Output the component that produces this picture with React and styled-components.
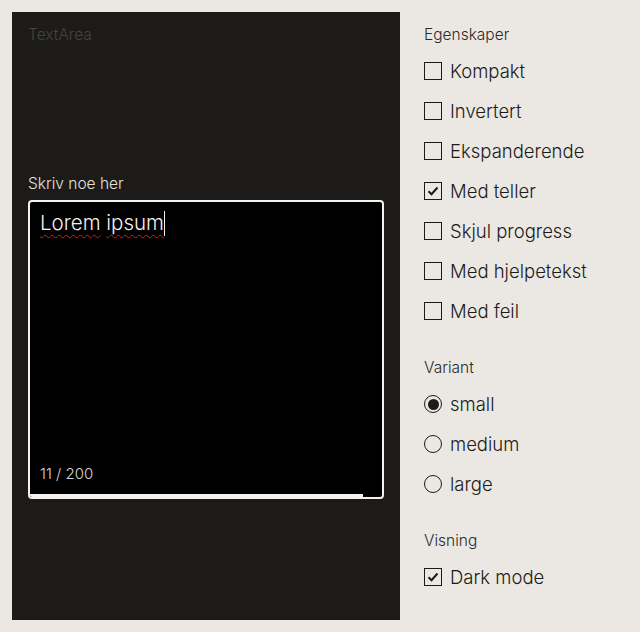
import React, { useState } from "react";
import styled, { createGlobalStyle } from "styled-components";

const GlobalStyle = createGlobalStyle`
  html, body {
    margin: 0;
    padding: 0;
    background: #ebe8e3;
    font-family: Inter, "Open Sans", "Liberation Sans", sans-serif;
    font-weight: 300;
  }
  * { box-sizing: border-box; }
`;

const Page = styled.div`
  display: flex;
  gap: 24px;
  padding: 12px;
  height: 632px;
`;

const Preview = styled.div`
  width: 388px;
  height: 608px;
  background: #1c1b19;
  padding: 13px 16px 16px;
  display: flex;
  flex-direction: column;
`;

const PreviewTitle = styled.div`
  font-size: 15.5px;
  line-height: 20px;
  color: #45433f;
`;

const Field = styled.div`
  margin-top: 129px;
  display: flex;
  flex-direction: column;
  gap: 6px;
`;

const FieldLabel = styled.label`
  font-size: 15.5px;
  line-height: 20px;
  color: #e4e2de;
`;

const Box = styled.div`
  height: 299px;
  border: 2px solid #f4f2ee;
  border-radius: 4px;
  background: #000;
  display: flex;
  flex-direction: column;
  overflow: hidden;
`;

const Input = styled.div`
  flex: 1;
  padding: 7px 10px;
  font-size: 20.5px;
  line-height: 28px;
  color: #f4f2ee;
`;

const Word = styled.span`
  text-decoration: underline wavy #d0201a;
  text-decoration-thickness: 1px;
  text-underline-offset: 4px;
`;

const Caret = styled.span`
  display: inline-block;
  width: 1px;
  height: 25px;
  background: #f4f2ee;
  vertical-align: -6px;
`;

const Counter = styled.div`
  padding: 0 10px;
  margin-bottom: 10px;
  font-size: 15px;
  line-height: 20px;
  color: #d8d6d2;
`;

const Progress = styled.div`
  height: 3px;
  background: #f4f2ee;
`;

const Controls = styled.div`
  display: flex;
  flex-direction: column;
  gap: 14px;
`;

const Group = styled.fieldset`
  border: 0;
  margin: 0;
  padding: 0;
  display: flex;
  flex-direction: column;
`;

const Legend = styled.div`
  font-size: 15.5px;
  line-height: 20px;
  color: #2b2a27;
  padding-top: 13px;
  margin-bottom: 6px;
`;

const Option = styled.label`
  display: flex;
  align-items: center;
  gap: 8px;
  height: 40px;
  font-size: 18.5px;
  color: #1c1b19;
  cursor: pointer;
`;

const CheckBox = styled.span`
  width: 18px;
  height: 18px;
  border: 1.5px solid #1c1b19;
  display: flex;
  align-items: center;
  justify-content: center;
  flex-shrink: 0;
`;

const RadioDot = styled.span`
  width: 18px;
  height: 18px;
  border: 1.5px solid #1c1b19;
  border-radius: 50%;
  display: flex;
  align-items: center;
  justify-content: center;
  flex-shrink: 0;

  &::after {
    content: "";
    width: 11px;
    height: 11px;
    border-radius: 50%;
    background: ${(p) => (p.$on ? "#1c1b19" : "transparent")};
  }
`;

function Check({ label, on, onToggle }) {
  return (
    <Option onClick={onToggle}>
      <CheckBox>
        {on && (
          <svg width="12" height="10" viewBox="0 0 12 10">
            <path d="M1.5 5.2 L4.5 8.2 L10.5 1.5" fill="none" stroke="#1c1b19" strokeWidth="2" />
          </svg>
        )}
      </CheckBox>
      {label}
    </Option>
  );
}

const properties = [
  "Kompakt",
  "Invertert",
  "Ekspanderende",
  "Med teller",
  "Skjul progress",
  "Med hjelpetekst",
  "Med feil",
];

export default function App() {
  const [checked, setChecked] = useState({ "Med teller": true });
  const [variant, setVariant] = useState("small");
  const [dark, setDark] = useState(true);
  const text = "Lorem ipsum";
  const max = 200;

  return (
    <>
      <GlobalStyle />
      <Page>
        <Preview>
          <PreviewTitle>TextArea</PreviewTitle>
          <Field>
            <FieldLabel>Skriv noe her</FieldLabel>
            <Box>
              <Input>
                <Word>Lorem</Word> <Word>ipsum</Word>
                <Caret />
              </Input>
              <Counter>
                {text.length} / {max}
              </Counter>
              <Progress style={{ width: `${((max - text.length) / max) * 100}%` }} />
            </Box>
          </Field>
        </Preview>
        <Controls>
          <Group>
            <Legend>Egenskaper</Legend>
            {properties.map((p) => (
              <Check
                key={p}
                label={p}
                on={!!checked[p]}
                onToggle={() => setChecked({ ...checked, [p]: !checked[p] })}
              />
            ))}
          </Group>
          <Group>
            <Legend>Variant</Legend>
            {["small", "medium", "large"].map((v) => (
              <Option key={v} onClick={() => setVariant(v)}>
                <RadioDot $on={variant === v} />
                {v}
              </Option>
            ))}
          </Group>
          <Group>
            <Legend>Visning</Legend>
            <Check label="Dark mode" on={dark} onToggle={() => setDark(!dark)} />
          </Group>
        </Controls>
      </Page>
    </>
  );
}
